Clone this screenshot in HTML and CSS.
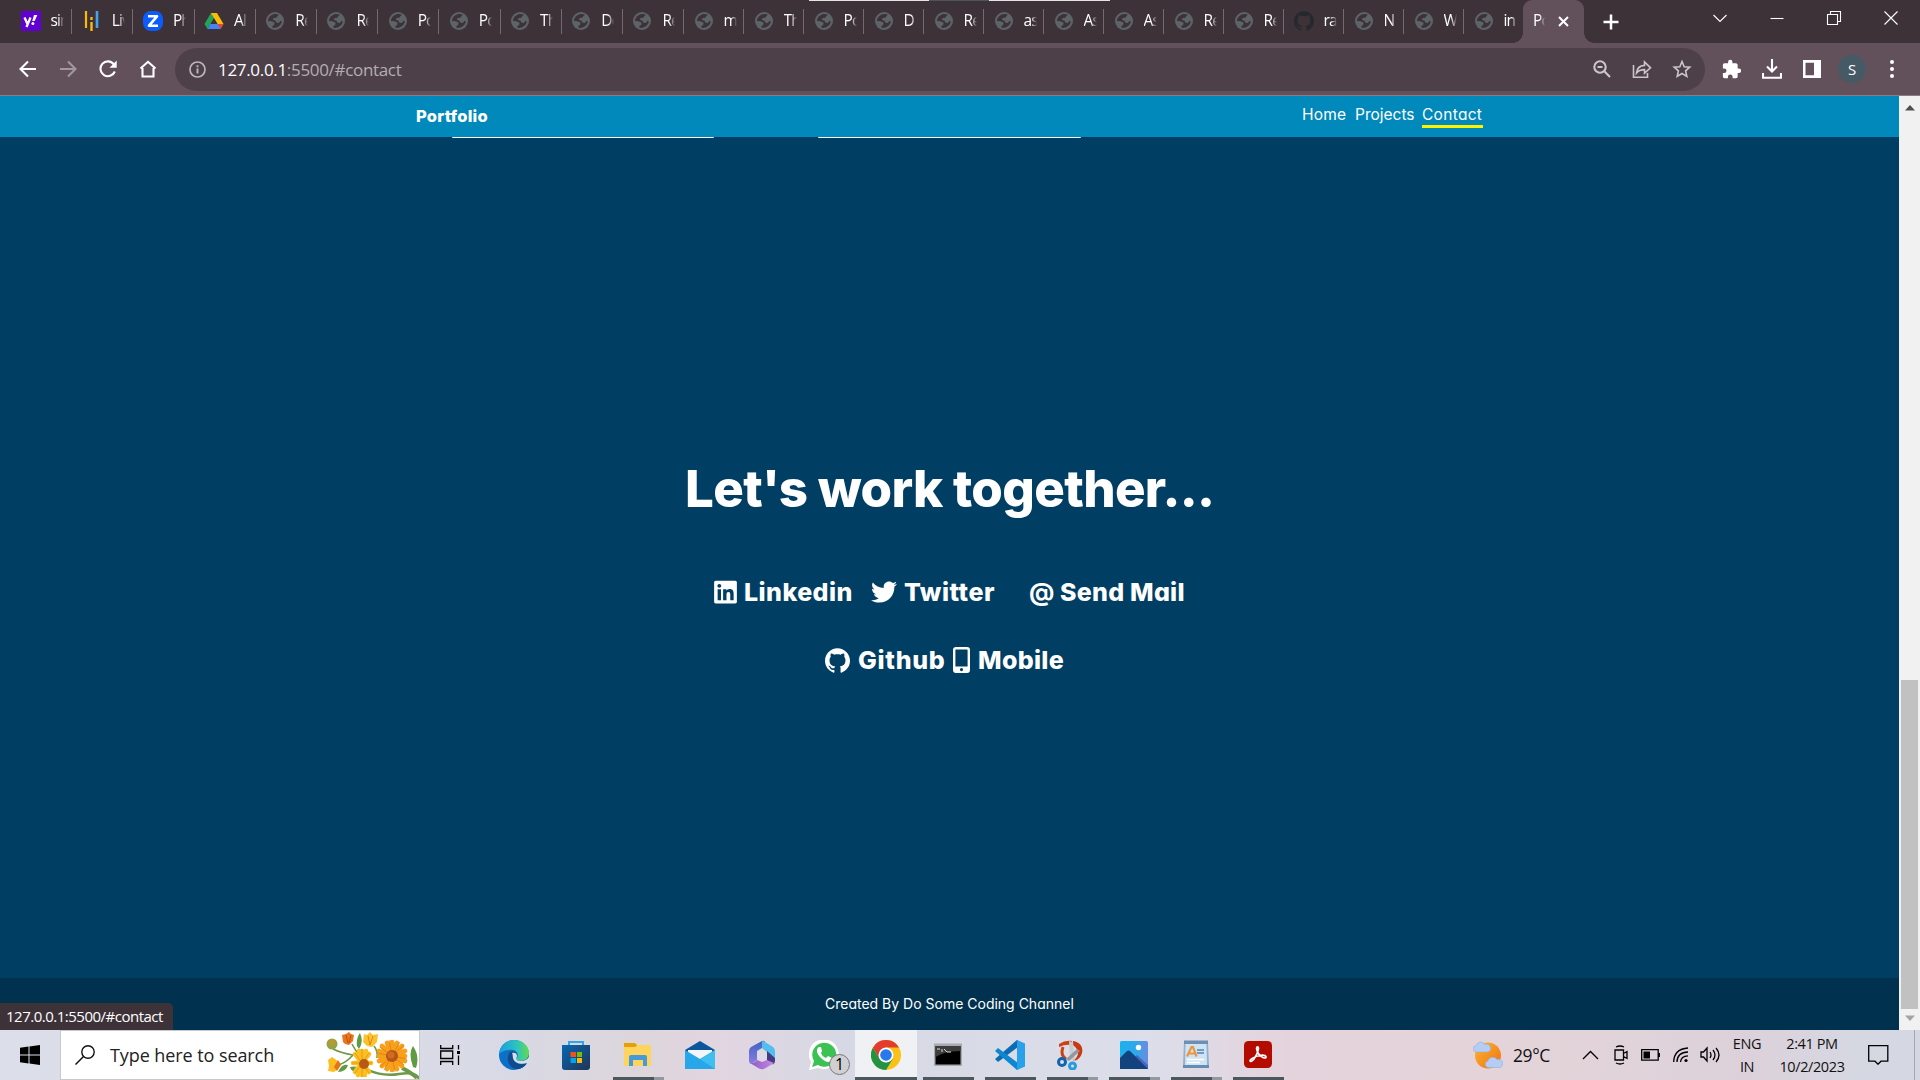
FILE: index.html
```html
<!DOCTYPE html>
<html lang="en">
<head>
<meta charset="utf-8">
<title>Portfolio</title>
<link rel="stylesheet" href="styles.css">
</head>
<body>
<svg class="defs" aria-hidden="true">
  <symbol id="globe" viewBox="0 0 18 18">
    <circle cx="9" cy="9" r="9" fill="#5d6468"/>
    <path d="M7.500 2.200C4.500 3 2 5.700 2 9l3.500.2 3 1.300-.3 2.500-1.700.8v2c4.500.6 9-2.300 9.300-6.300l-1.500-.7-1.300 2.200-2.500-.3-1-2-2.500-.6.500-2 2.700-.3 1.300-1.800 1.500-1.300C11.300 2 9.500 1.700 7.500 2.200z" fill="#3e3239"/>
  </symbol>
  <symbol id="github" viewBox="0 0 24 24"><path d="M12 .297c-6.63 0-12 5.373-12 12 0 5.303 3.438 9.8 8.205 11.385.6.113.82-.258.82-.577 0-.285-.01-1.04-.015-2.04-3.338.724-4.042-1.61-4.042-1.61C4.422 18.07 3.633 17.7 3.633 17.7c-1.087-.744.084-.729.084-.729 1.205.084 1.838 1.236 1.838 1.236 1.07 1.835 2.809 1.305 3.495.998.108-.776.417-1.305.76-1.605-2.665-.3-5.466-1.332-5.466-5.93 0-1.31.465-2.38 1.235-3.22-.135-.303-.54-1.523.105-3.176 0 0 1.005-.322 3.3 1.23.96-.267 1.98-.399 3-.405 1.02.006 2.04.138 3 .405 2.28-1.552 3.285-1.23 3.285-1.23.645 1.653.24 2.873.12 3.176.765.84 1.23 1.91 1.23 3.22 0 4.61-2.805 5.625-5.475 5.92.42.36.81 1.096.81 2.22 0 1.606-.015 2.896-.015 3.286 0 .315.21.69.825.57C20.565 22.092 24 17.592 24 12.297c0-6.627-5.373-12-12-12"/></symbol>
</svg>

<header class="tabstrip">
  <div class="tabs wide">
    <div class="tab"><svg class="fav big" viewBox="0 0 20 20"><rect width="20" height="20" fill="#6001d2"/><path d="M3.500 6.500l3 6.500M9.500 6.500l-4 9.500" stroke="#fff" stroke-width="2.300" fill="none"/><path d="M13 4h3.300l-2.600 6h-2.500z" fill="#fff"/><circle cx="11.900" cy="12.500" r="1.500" fill="#fff"/></svg><span class="title">sin</span></div>
    <div class="tab"><svg class="fav big" viewBox="0 0 20 20"><path d="M4 0v17" stroke="#f9ba08" stroke-width="2.200"/><path d="M9.500 6v3" stroke="#f9ba08" stroke-width="2.400"/><path d="M9.500 11v9" stroke="#f9ba08" stroke-width="2.400"/><path d="M15 0v17" stroke="#42a5e8" stroke-width="2.600"/></svg><span class="title">Liv</span></div>
    <div class="tab"><svg class="fav big" viewBox="0 0 20 20"><rect width="20" height="20" rx="8" fill="#0b5cff"/><path d="M5 5.300h9L6 14.700h9" fill="none" stroke="#fff" stroke-width="2.600" stroke-linejoin="round"/></svg><span class="title">Ph</span></div>
    <div class="tab"><svg class="fav big" viewBox="0 0 20 20"><path d="M7 2h6l-6.500 11L3.500 18 .5 13z" fill="#24a354"/><path d="M7 2h6l6.500 11h-6z" fill="#fbbc04"/><path d="M6.300 13h13.200l-3 5h-13z" fill="#4285f4"/><path d="M13.500 13h6l-3 5z" fill="#ea4335"/><path d="M10 7.400L13.300 13H6.700z" fill="#3e3239"/></svg><span class="title">All</span></div>
    <div class="tab"><svg class="fav"><use href="#globe"/></svg><span class="title">Re</span></div>
    <div class="tab"><svg class="fav"><use href="#globe"/></svg><span class="title">Re</span></div>
    <div class="tab"><svg class="fav"><use href="#globe"/></svg><span class="title">Po</span></div>
    <div class="tab"><svg class="fav"><use href="#globe"/></svg><span class="title">Po</span></div>
    <div class="tab"><svg class="fav"><use href="#globe"/></svg><span class="title">Th</span></div>
    <div class="tab"><svg class="fav"><use href="#globe"/></svg><span class="title">De</span></div>
    <div class="tab"><svg class="fav"><use href="#globe"/></svg><span class="title">Re</span></div>
  </div>
  <div class="tabs">
    <div class="tab"><svg class="fav"><use href="#globe"/></svg><span class="title">m</span></div>
    <div class="tab"><svg class="fav"><use href="#globe"/></svg><span class="title">Th</span></div>
    <div class="tab"><svg class="fav"><use href="#globe"/></svg><span class="title">Po</span></div>
    <div class="tab"><svg class="fav"><use href="#globe"/></svg><span class="title">D</span></div>
    <div class="tab"><svg class="fav"><use href="#globe"/></svg><span class="title">Re</span></div>
    <div class="tab"><svg class="fav"><use href="#globe"/></svg><span class="title">as</span></div>
    <div class="tab"><svg class="fav"><use href="#globe"/></svg><span class="title">As</span></div>
    <div class="tab"><svg class="fav"><use href="#globe"/></svg><span class="title">As</span></div>
    <div class="tab"><svg class="fav"><use href="#globe"/></svg><span class="title">Re</span></div>
    <div class="tab"><svg class="fav"><use href="#globe"/></svg><span class="title">Re</span></div>
    <div class="tab"><svg class="fav big octo"><use href="#github"/></svg><span class="title">ra</span></div>
    <div class="tab"><svg class="fav"><use href="#globe"/></svg><span class="title">N</span></div>
    <div class="tab"><svg class="fav"><use href="#globe"/></svg><span class="title">W</span></div>
    <div class="tab last"><svg class="fav"><use href="#globe"/></svg><span class="title">in</span></div>
  </div>
  <div class="tab-active"><span class="title">Po</span><svg width="11" height="11" viewBox="0 0 11 11"><path d="M1 1l9 9M10 1l-9 9" stroke="#fff" stroke-width="2"/></svg></div>
  <svg class="newtab" width="16" height="16" viewBox="0 0 16 16"><path d="M8 .5v15M.5 8h15" stroke="#fff" stroke-width="2.500"/></svg>
  <div class="winctl">
    <svg viewBox="0 0 16 16"><path d="M1.500 5L8 11.500 14.500 5" /></svg>
    <svg viewBox="0 0 16 16"><path d="M1.500 8.500h13"/></svg>
    <svg viewBox="0 0 16 16"><path d="M1.500 4.500h10v10h-10zM4.500 4.500v-3h10v10h-3"/></svg>
    <svg viewBox="0 0 16 16"><path d="M1.500 1.500l13 13M14.500 1.500l-13 13"/></svg>
  </div>
  <div class="edge-line"><i></i></div>
</header>

<div class="toolbar">
  <div class="btn"><svg width="18" height="18" viewBox="0 0 18 18"><path d="M17 9H2M9 1.500L1.500 9 9 16.500" class="ln"/></svg></div>
  <div class="btn dim"><svg width="18" height="18" viewBox="0 0 18 18"><path d="M1 9h15M9 1.500L16.500 9 9 16.500" class="ln"/></svg></div>
  <div class="btn"><svg width="18" height="18" viewBox="0 0 18 18"><path d="M15.800 11.500A7.400 7.400 0 1 1 14.800 4.300L16 6" class="ln"/><path d="M17.700.5v7.200h-7.200z" fill="#fff"/></svg></div>
  <div class="btn"><svg width="18" height="18" viewBox="0 0 18 18"><path d="M1.500 8.500L9 1.800l7.500 6.700M3.500 8v8.500h11V8" class="ln"/></svg></div>
  <div class="omnibox">
    <svg width="17" height="17" viewBox="0 0 17 17"><circle cx="8.500" cy="8.500" r="7.500" fill="none" stroke="#bdb6ba" stroke-width="1.700"/><path d="M8.500 7.500v5M8.500 4.200v2" stroke="#bdb6ba" stroke-width="1.900"/></svg>
    <span class="url"><b>127.0.0.1</b>:5500/#contact</span>
    <div class="btn soft"><svg width="18" height="18" viewBox="0 0 18 18"><circle cx="7" cy="7" r="5.700" class="ln"/><path d="M4.500 7h5M11.300 11.300l5.700 5.700" class="ln"/></svg></div>
    <div class="btn soft"><svg width="20" height="20" viewBox="0 0 20 20"><path d="M1.500 6v12.300h14V14M4.500 14c.5-5 3-7.300 8-7.600V3l6 5.800-6 5.400v-3.600c-3.500 0-6 .8-8 3.400z" class="thin"/></svg></div>
    <div class="btn soft"><svg width="20" height="20" viewBox="0 0 20 20"><path d="M10 2.500l2.200 5.200 5.600.5-4.200 3.700 1.200 5.500-4.800-2.900-4.800 2.900 1.200-5.500L2.200 8.200l5.600-.5z" class="thin"/></svg></div>
  </div>
  <div class="btn"><svg width="20" height="20" viewBox="1 0 23 23"><path d="M20.500 11H19V7c0-1.100-.9-2-2-2h-4V3.500a2.500 2.500 0 0 0-5 0V5H4c-1.100 0-1.990.9-1.990 2v3.800H3.500a2.700 2.700 0 0 1 0 5.400H2V20c0 1.100.9 2 2 2h3.800v-1.500a2.700 2.700 0 0 1 5.400 0V22H17c1.100 0 2-.9 2-2v-4h1.500a2.500 2.500 0 0 0 0-5z" fill="#fff"/></svg></div>
  <div class="btn"><svg width="20" height="20" viewBox="0 0 20 20"><path d="M10 0v12M5 7.500l5 5 5-5M1 14v4.700h18V14" class="ln"/></svg></div>
  <div class="btn"><svg width="18" height="18" viewBox="0 0 18 18"><path d="M0 0h18v18H0zM2.500 2.700v12.600H11V2.700z" fill="#fff" fill-rule="evenodd"/></svg></div>
  <div class="btn"><span class="avatar">S</span></div>
  <div class="btn"><svg width="4" height="18" viewBox="0 0 4 18"><circle cx="2" cy="2" r="2" fill="#fff"/><circle cx="2" cy="9" r="2" fill="#fff"/><circle cx="2" cy="16" r="2" fill="#fff"/></svg></div>
</div>

<div class="viewport">
  <div class="site">
    <nav class="nav">
      <span class="brand">Portfolio</span>
      <a class="home">Home</a><a class="projects">Projects</a><a class="contact-link">Contact</a>
    </nav>
    <main class="contact">
      <div class="cards"><i></i><i></i></div>
      <h1>Let's work together...</h1>
      <div class="links first">
        <a><svg width="23" height="26" viewBox="0 0 448 512"><path d="M416 32H31.900C14.300 32 0 46.500 0 64.300v383.400C0 465.500 14.300 480 31.900 480H416c17.600 0 32-14.500 32-32.300V64.300c0-17.800-14.400-32.300-32-32.300zM135.400 416H69V202.200h66.500V416zm-33.200-243c-21.300 0-38.500-17.300-38.500-38.500S80.900 96 102.200 96c21.200 0 38.500 17.300 38.500 38.500 0 21.300-17.200 38.500-38.500 38.500zm282.100 243h-66.400V312c0-24.800-.5-56.700-34.500-56.700-34.600 0-39.900 27-39.900 54.900V416h-66.400V202.200h63.700v29.200h.9c8.900-16.800 30.600-34.500 62.900-34.500 67.200 0 79.700 44.300 79.700 101.900V416z"/></svg><span class="linkedin">Linkedin</span></a>
        <a><svg width="26" height="26" viewBox="0 0 512 512"><path d="M459.370 151.716c.325 4.548.325 9.097.325 13.645 0 138.720-105.583 298.558-298.558 298.558-59.452 0-114.680-17.219-161.137-47.106 8.447.974 16.568 1.299 25.340 1.299 49.055 0 94.213-16.568 130.274-44.832-46.132-.975-84.792-31.188-98.112-72.772 6.498.974 12.995 1.624 19.818 1.624 9.421 0 18.843-1.300 27.614-3.573-48.081-9.747-84.143-51.980-84.143-102.985v-1.299c13.969 7.797 30.214 12.670 47.431 13.319-28.264-18.843-46.781-51.005-46.781-87.391 0-19.492 5.197-37.360 14.294-52.954 51.655 63.675 129.300 105.258 216.365 109.807-1.624-7.797-2.599-15.918-2.599-24.040 0-57.828 46.782-104.934 104.934-104.934 30.213 0 57.502 12.670 76.670 33.137 23.715-4.548 46.456-13.320 66.599-25.340-7.798 24.366-24.366 44.833-46.132 57.827 21.117-2.273 41.584-8.122 60.426-16.243-14.292 20.791-32.161 39.308-52.628 54.253z"/></svg><span class="twitter">Twitter</span></a>
        <a><span class="at">@</span><span class="mail">Send Mail</span></a>
      </div>
      <div class="links second">
        <a><svg width="25" height="25"><use href="#github"/></svg><span class="gh">Github</span></a>
        <a><svg width="17" height="26" viewBox="0 0 17 26"><path d="M3 0h11a3 3 0 0 1 3 3v20a3 3 0 0 1-3 3H3a3 3 0 0 1-3-3V3a3 3 0 0 1 3-3zM3 2.400a.6.600 0 0 0-.6.600v16.500h12.200V3a.6.600 0 0 0-.6-.6zM8.500 21a1.600 1.600 0 1 0 0 3.200 1.600 1.600 0 0 0 0-3.200z" fill-rule="evenodd"/></svg><span class="mobile">Mobile</span></a>
      </div>
    </main>
    <footer>Created By Do Some Coding Channel</footer>
  </div>
  <div class="scrollbar">
    <svg width="10" height="6" viewBox="0 0 10 6"><path d="M5 0l5 5.500H0z" fill="#505050"/></svg>
    <div class="thumb"></div>
    <svg width="10" height="6" viewBox="0 0 10 6"><path d="M0 .5h10L5 6z" fill="#a3a3a3"/></svg>
  </div>
  <div class="status">127.0.0.1:5500/#contact</div>
</div>

<div class="taskbar">
  <div class="start"><svg width="20" height="20" viewBox="0 0 20 20"><path d="M0 2.800L8.500 1.600v8H0zM9.500 1.500L20 0v9.600H9.500zM0 10.500h8.500v8L0 17.300zM9.500 10.500H20V20L9.500 18.600z"/></svg></div>
  <div class="search">
    <svg class="lens" width="20" height="20" viewBox="0 0 20 20"><circle cx="13" cy="7" r="6.200" fill="none" stroke="#111" stroke-width="1.400"/><path d="M8.500 11.500L.5 19.500" stroke="#111" stroke-width="1.500"/></svg>
    <span>Type here to search</span>
    <svg class="flowers" width="93" height="47" viewBox="0 0 93 47">
      <g fill="none" stroke="#6b9a48" stroke-width="1.600"><path d="M7 17q8 4 20 6M12 33q8-2 15-10M26 12q3 6 6 9M48 14q4 5 3 12"/><path d="M40 37q16 8 33 5T93 47" stroke-width="2.500"/><path d="M76 36q10 5 15 10" stroke-width="4"/></g>
      <g fill="#5f9b45"><path d="M31 14q-1-8 3-13 4 9-1 16zM12 40q8 0 10-7-6-2-10 7zM87 35q-5-14 0-21 7 10 3 22zM24 35q8-2 10 3-8 4-10-3z"/></g>
      <circle cx="6" cy="12" r="5.500" fill="#92a443"/><circle cx="6" cy="10.500" r="3.300" fill="#b69b35"/>
      <path d="M17 10L16 3l4-1 3-2 2 2 3 1-1 6-4 4-4-1z" fill="#e8761f"/><path d="M20 3l2 8M25 3l-2 8" stroke="#bd4f0e"/>
      <path d="M37 10L38 2l3 1 3-3 3 3 5-1-1 8-5 5-5-1z" fill="#fbc22b"/><path d="M42 4l2 9M47 4l-3 9" stroke="#dc8913"/>
      <path d="M2 28l4-3 3 2 5 4-2 6-4 3-6-1 1-5z" fill="#fdbd20"/><path d="M12 28l3 5-4 6-3-4z" fill="#e2751a"/>
      <g transform="translate(36 31)"><g stroke="#fcbf1f" stroke-width="4.500" stroke-linecap="round"><path d="M0-12V12M-9 0H9M-7-9L7 9M7-9L-7 9M-3-12L3 12M4-12L-4 12"/></g><g stroke="#df8a14" stroke-width=".7"><path d="M0-14V14M-10 0H10M-7-10L7 10M7-10L-7 10"/></g><circle r="5" cx="2" cy="1" fill="#b65a15"/></g>
      <g transform="translate(66 24)"><g stroke="#f9a01b" stroke-width="4.700" stroke-linecap="round"><path d="M0-14V14M-13 0H13M-10-10L10 10M10-10L-10 10M-5-13L5 13M5-13L-5 13M-13-5L13 5M-13 5L13-5"/></g><g stroke="#d87810" stroke-width=".7"><path d="M-3-16L3 16M-15-3L15 3M-12-9L12 9M12-11L-12 11M8-14L-8 14"/></g><circle r="6" fill="#b4531a"/><circle cx="-1" cy="-1" r="3.500" fill="#cf6b25"/></g>
    </svg>
  </div>
  <div class="taskview"><svg width="21" height="20" viewBox="0 0 21 20"><path d="M.7 0v3.500h12V0M.7 20v-3.500h12V20M.7 6h12v7.500H.7zM18.500 0v4.500M18.500 10.500V20" fill="none" stroke="#000" stroke-width="1.300"/><path d="M17 6h3v3h-3z"/></svg></div>
  <div class="apps">
    <div class="app"><svg viewBox="0 0 30 30"><defs><linearGradient id="eg" x1="0" x2="1"><stop offset="0" stop-color="#1b9de2"/><stop offset=".6" stop-color="#2dc4bd"/><stop offset="1" stop-color="#65d94e"/></linearGradient></defs><circle cx="15" cy="15" r="15" fill="#0c70c8"/><path d="M0 14C1 5 7 0 15 0c9 0 15 6 15 13 0 5-4 8-9 8-3 0-4-2-3-3 3-6-3-9-8-8C5 10 1 13 0 14z" fill="url(#eg)"/><path d="M10 13c-4 8 2 17 10 16 4-1 7-4 8-6-7 3-13 0-14-5-.5-3 1-5 3-5-2-2-5-2-7 0z" fill="#104b8d"/><path d="M13 13c2-1 5 0 5 3-1 3-1 5 4 5 4 0 7-2 8-4l0 4-2 2c-6 2-13 0-14-5-.5-2 0-4-1-5z" fill="#dbdde6"/></svg></div>
    <div class="app"><svg viewBox="0 0 30 30"><defs><linearGradient id="st" x1="0" y1="0" x2="1" y2="1"><stop stop-color="#0568b3"/><stop offset="1" stop-color="#223454"/></linearGradient></defs><path d="M8 7V2h14v5" fill="none" stroke="#2ba8ec" stroke-width="2"/><path d="M1 5h28v22a3 3 0 0 1-3 3H4a3 3 0 0 1-3-3z" fill="url(#st)"/><path d="M9.500 12H15v5H9.500z" fill="#f25022"/><path d="M16 12h5v5h-5z" fill="#7fba00"/><path d="M9.500 18H15v5H9.500z" fill="#00a4ef"/><path d="M16 18h5v5h-5z" fill="#ffb900"/></svg></div>
    <div class="app run multi"><svg viewBox="0 0 30 30"><path d="M1 3h11l2 2v3H1z" fill="#e6a100"/><path d="M1 7h11l3-2h13v21H1z" fill="#ffd45d"/><path d="M6 26V17q0-2 2-2h14q2 0 2 2v9h-4v-6H10v6z" fill="#469ad8"/></svg></div>
    <div class="app"><svg viewBox="0 0 30 30"><path d="M0 10L15 1l15 9v5H0z" fill="#0a579e"/><path d="M3 10h24v8L15 26 3 18z" fill="#f4f5f8"/><path d="M0 10l15 9 15-9v19H0z" fill="#26a7e9"/><path d="M15 19l15-9v19z" fill="#41bdf0"/></svg></div>
    <div class="app"><svg viewBox="0 0 30 30"><defs><linearGradient id="oa" x1="0" x2="0" y1="0" y2="1"><stop stop-color="#3a66c4"/><stop offset="1" stop-color="#8f7be0"/></linearGradient><linearGradient id="ob" x1="0" x2="1"><stop stop-color="#8a5cc4"/><stop offset="1" stop-color="#c689e2"/></linearGradient></defs><path d="M15 1L4 7Q2 8.500 2 11v10q0 2 2 3l6-4v-9l8-5V1.500q-1.500-1-3-.5z" fill="url(#oa)"/><path d="M15 1q1.500 0 3 1l8 5q2 1.500 2 4v10q-4 0-8-3v-6l-5-4z" fill="#52bfee"/><path d="M20 11l8 7v3q0 2-2 3.500l-6-3.500z" fill="#453b82"/><path d="M3 23q4 1 7-3l5 2 5-2 7 3-9 5.500q-3 1.500-6 0z" fill="url(#ob)"/><path d="M15 10l5 3v5l-5 3-5-3v-5z" fill="#dfdbe4"/></svg></div>
    <div class="app"><svg viewBox="0 0 30 30"><path d="M0 30l2-8A15 15 0 1 1 9 28z" fill="#fff"/><path d="M3 27l2-6A12 12 0 1 1 9 25z" fill="#3cc253"/><path d="M10 7c-3 2-3 6 2 11 5 5 9 5 11 2l0-2-4-2-2 2c-3-1-4-3-5-5l1-2-1-4z" fill="#fff"/></svg><span class="badge">1</span></div>
    <div class="app run full"><svg viewBox="0 0 30 30"><circle cx="15" cy="15" r="15" fill="#fbc116"/><path d="M2 7.500A15 15 0 0 1 28 7.500H15L8.500 19z" fill="#e33b2e"/><path d="M2 7.500A15 15 0 0 0 15 30l7-11.500-7 4-6.500-3.500z" fill="#229342"/><circle cx="15" cy="15" r="7.500" fill="#fff"/><circle cx="15" cy="15" r="5.800" fill="#2878ee"/></svg></div>
    <div class="app run"><svg viewBox="0 0 30 30"><rect x="1" y="3.500" width="28" height="22.500" fill="#a8abad"/><rect x="2.500" y="6" width="25" height="18.500" fill="#000"/><path d="M2.500 6h25v5q-16 0-25 6z" fill="#3d3d3d"/><path d="M4 9h3M9 9v3M11 9l3 3h4" stroke="#ddd" fill="none"/></svg></div>
    <div class="app run"><svg viewBox="0 0 30 30"><path d="M0 19l3 3L23 7V0h-1z" fill="#0b6cb0"/><path d="M0 11l3-3 20 15v7h-1z" fill="#0f86d0"/><path d="M22 0l8 3.500v23L22 30z" fill="#28a0ec"/></svg></div>
    <div class="app run multi"><svg viewBox="0 0 30 30"><path d="M2 4q6-4 13-3v4Q8 4 2 7z" fill="#cf3f12"/><path d="M16 1c14 2 11 19 0 20q10-8 0-16z" fill="#c93a10"/><path d="M6 7q-3 8 3 12" fill="none" stroke="#cf3f12" stroke-width="3"/><path d="M12 1l4 1 2 19-5-2z" fill="#c9cbce"/><path d="M20 9l3 2-11 10-3-2z" fill="#94989d"/><circle cx="5" cy="22" r="3.500" fill="none" stroke="#1264ae" stroke-width="3"/><circle cx="15.500" cy="26" r="3" fill="none" stroke="#269cde" stroke-width="3"/></svg></div>
    <div class="app run multi"><svg viewBox="0 0 30 30"><defs><linearGradient id="ph"><stop stop-color="#1bb2ed"/><stop offset=".6" stop-color="#2fa8ea"/><stop offset="1" stop-color="#6f8add"/></linearGradient></defs><rect x="1" y="1" width="28" height="28" rx="1.500" fill="url(#ph)"/><path d="M16 17l2-2 11 10v4H22z" fill="#4a66c0"/><path d="M1 18l7-7q1.500-1 3 0l18 18H1z" fill="#12437f"/><circle cx="19.500" cy="7.500" r="2.700" fill="#fff"/></svg></div>
    <div class="app run multi"><svg viewBox="0 0 30 30"><path d="M3 2h24l1 24H2z" fill="#8fb0cf"/><path d="M4.500 3h21l.5 22H4z" fill="#cfe4f3"/><path d="M3 .5h24V4H3z" fill="#6d8fb4"/><path d="M2 25h26v3H2z" fill="#658cb5"/><path d="M6 16.500L10.500 7h1.500l3.500 9.500M8 13.500h6" fill="none" stroke="#ed9440" stroke-width="2.200"/><path d="M16 10h7M16 13h7" stroke="#5384b8" stroke-width="1.500"/><path d="M6 19.500h17M6 22.500h13" stroke="#fff" stroke-width="1.700"/></svg></div>
    <div class="app run"><svg viewBox="0 0 30 30"><rect x="1" y="1" width="28" height="27" rx="4.500" fill="#b30b00"/><path d="M14 7c3-1 1 6-3 12-4 5-6 1-1-1 5-3 12-4 13-1 0 3-8-1-9-7-1-2 0-3 0-3z" fill="none" stroke="#fff" stroke-width="1.700"/></svg></div>
  </div>
  <div class="tray">
    <svg class="weather" width="30" height="28" viewBox="0 0 30 28"><defs><linearGradient id="sun" x1="0" x2="1" y1="0" y2="1"><stop stop-color="#fdb92c"/><stop offset="1" stop-color="#f06d16"/></linearGradient></defs><circle cx="15" cy="14.500" r="13" fill="url(#sun)"/><g fill="#b5cdf3" stroke="#8fb0e6" stroke-width=".6"><path d="M3 11a3.300 3.300 0 0 1 0-6.500A5 5 0 0 1 12 3.500 3.500 3.500 0 0 1 15 11z"/><path d="M15 26.500a3.300 3.300 0 0 1 0-6.500 5 5 0 0 1 9-1.500 3.700 3.700 0 0 1 3 8z"/></g></svg>
    <span class="temp">29°C</span>
    <svg class="chev" width="17" height="10" viewBox="0 0 17 10"><path d="M1 9l7.500-7.500L16 9"/></svg>
    <svg class="cam" width="16" height="20" viewBox="0 0 16 20"><path d="M1 5h8.500v10H1zM9.500 8.500L13 6.500v7l-3.500-2M2 2q4-2 8 0M2 18q4 2 8 0"/></svg>
    <svg class="bat" width="19" height="12" viewBox="0 0 19 12"><path d="M.7.700h16.500v10.500H.7zM18.300 4v4"/><path d="M2.500 2.500H9v7H2.500z" fill="#000" stroke="none"/></svg>
    <svg class="wifi" width="16" height="16" viewBox="0 0 16 16"><path d="M.7 15Q1 2 15 1M4 15Q4 5.500 15 5M7.500 15Q8 9 15 8.800"/><circle cx="13" cy="13.500" r="1.600" fill="#000" stroke="none"/></svg>
    <svg class="vol" width="21" height="18" viewBox="0 0 21 18"><path d="M1 6h2.500L7 2v13l-3.500-4H1zM10 6q2 3 0 6M13 4q4 5 0 10M16 2q6 7 0 14"/></svg>
    <div class="lines lang"><span>ENG</span><span>IN</span></div>
    <div class="lines clock"><span class="time">2:41 PM</span><span class="date">10/2/2023</span></div>
    <svg class="note" width="21" height="20" viewBox="0 0 21 20"><path d="M.7.700h19.100v15.500H13l-3 3-3-3H.7z"/></svg>
  </div>
</div>
</body>
</html>
```
FILE: styles.css
```css
* { box-sizing: border-box; }
body {
  margin: 0;
  width: 1920px;
  height: 1080px;
  overflow: hidden;
  display: flex;
  flex-direction: column;
  font-family: "Open Sans", "Noto Sans", sans-serif;
}
svg { display: block; flex: none; }
.defs { position: absolute; width: 0; height: 0; }

/* Browser tab strip */
.tabstrip {
  position: relative;
  display: flex;
  align-items: center;
  height: 43px;
  padding-left: 11px;
  background: #3e3239;
}
.tabs { display: flex; width: 840px; height: 43px; align-items: center; }
.tabs.wide { width: 673px; }
.tab {
  flex: 1;
  height: 25px;
  display: flex;
  align-items: center;
  padding: 0 0 1px 10.5px;
  border-right: 1px solid #75686f;
}
.tab.last { border-color: transparent; }
.fav { width: 18px; height: 18px; }
.fav.big { width: 20px; height: 20px; margin: 0 -1px; }
.octo { fill: #24292e; }
.title {
  width: 13px;
  margin: 0 0 2px 11px;
  overflow: hidden;
  white-space: nowrap;
  color: #fff;
  font-size: 15.5px;
  line-height: 20px;
  letter-spacing: -0.9px;
  -webkit-mask-image: linear-gradient(90deg, #000 55%, transparent);
  mask-image: linear-gradient(90deg, #000 55%, transparent);
}
.tab-active {
  position: relative;
  width: 61px;
  height: 43px;
  margin-left: -1px;
  display: flex;
  align-items: center;
  background: #62515b;
  border-radius: 9px 9px 0 0;
}
.tab-active::before, .tab-active::after {
  content: "";
  position: absolute;
  bottom: 0;
  left: -10px;
  width: 10px;
  height: 10px;
  background: radial-gradient(circle at 0 0, transparent 9.5px, #62515b 10px);
}
.tab-active::after { left: 61px; transform: scaleX(-1); }
.tab-active .title { margin: 0 13px 3px 10px; width: 12px; }
.newtab { margin-left: 19px; }
.winctl { display: flex; gap: 41px; margin: -7px 0 0 93px; }
.winctl svg { width: 16px; height: 16px; fill: none; stroke: #fff; stroke-width: 1.1; }
.edge-line { position: absolute; left: 809px; top: 0; width: 301px; height: 1px; background: #e8e2e5; }
.edge-line i { display: block; width: 60px; height: 1px; margin-left: 120px; background: #4b565b; }

/* Browser toolbar */
.toolbar {
  display: flex;
  align-items: center;
  height: 53px;
  padding: 0 0 1px 8px;
  background: #62515b;
  border-bottom: 1px solid #8d7b86;
}
.btn { width: 40px; display: flex; justify-content: center; align-items: center; }
.ln { fill: none; stroke: #fff; stroke-width: 2.1; }
.thin { fill: none; stroke: #fff; stroke-width: 1.6; }
.dim { opacity: .4; }
.soft { opacity: .7; }
.omnibox {
  display: flex;
  align-items: center;
  width: 1530px;
  height: 43px;
  margin: 1px 7px 0;
  padding: 0 3px 0 14px;
  border-radius: 22px;
  background: #4d4049;
}
.url { flex: 1; margin-left: 12px; font-size: 17px; letter-spacing: -.32px; color: #b5adb2; }
.url b { font-weight: 400; color: #fff; }
.avatar {
  width: 28px;
  height: 28px;
  border-radius: 50%;
  background: #455a64;
  color: #fff;
  font-size: 15px;
  line-height: 28px;
  text-align: center;
}

/* Web page */
.viewport { position: relative; display: flex; height: 934px; }
.site {
  width: 1899px;
  font-family: Inter, "Liberation Sans", sans-serif;
  font-feature-settings: "cv11";
  color: #fff;
  background: #003e63;
}
.nav { display: flex; align-items: flex-start; height: 41px; padding: 8px 0 0 416px; background: #0089ba; }
.nav a { font-size: 15.5px; line-height: 22px; height: 24px; white-space: nowrap; }
.brand { width: 886px; font-size: 16.5px; font-weight: 800; line-height: 25px; letter-spacing: .2px; }
.nav .home { width: 53px; letter-spacing: .2px; }
.nav .projects { width: 67px; }
.nav .contact-link { width: 61px; border-bottom: 3px solid #fff200; letter-spacing: .3px; }
.contact { height: 841px; }
.cards { display: flex; gap: 104px; padding-left: 452px; height: 322px; }
.cards i { width: 262px; height: 1px; background: #fff; border-radius: 0 0 2px 2px; }
.cards i + i { width: 263px; }
h1 { margin: 0 0 58px; padding-left: 685px; font-size: 51px; line-height: 60px; font-weight: 800; letter-spacing: -.67px; white-space: nowrap; }
.links { display: flex; height: 30px; font-size: 25px; font-weight: 800; line-height: 30px; fill: #fff; }
.links a { display: flex; align-items: center; white-space: nowrap; }
.links.first { padding-left: 714px; margin-bottom: 38px; }
.links.second { padding-left: 825px; }
.linkedin { width: 127px; margin-left: 7px; letter-spacing: .45px; }
.twitter { width: 125px; margin-left: 7px; letter-spacing: .5px; }
.at { width: 31px; font-weight: 700; }
.mail { width: 130px; letter-spacing: .25px; }
.gh { width: 95px; margin-left: 8px; letter-spacing: .7px; }
.mobile { margin-left: 8px; letter-spacing: .3px; }
footer { height: 52px; background: #00324f; font-size: 14px; line-height: 51px; padding-left: 825px; }
.scrollbar {
  width: 21px;
  display: flex;
  flex-direction: column;
  align-items: center;
  padding: 9px 0;
  background: #f1f1f1;
}
.thumb { width: 17px; height: 329px; margin: 569px 0 6px; background: #c1c1c1; }
.status {
  position: absolute;
  left: 0;
  bottom: 0;
  width: 173px;
  height: 27px;
  padding-left: 6px;
  border-radius: 0 5px 0 0;
  background: #3e3239;
  color: #fff;
  font-size: 15px;
  line-height: 26px;
  letter-spacing: -.5px;
}

/* Windows taskbar */
.taskbar {
  display: flex;
  align-items: center;
  height: 50px;
  background: linear-gradient(90deg, #dcdeea 0, #d8dae6 25%, #dcd6dc 33%, #e2d5e0 37%, #d6d9e4 44%, #dcdeea 60%, #e4d3dc 67%, #e4d4d9 79%, #dcd1da 91%, #d5d8e2 97%, #d5d8e2 100%);
}
.start { width: 60px; padding-left: 20px; }
.search {
  display: flex;
  align-items: center;
  width: 360px;
  height: 50px;
  padding-left: 14px;
  border: 1px solid #c8c8c8;
  background: #fff;
  color: #222;
}
.search span { width: 217px; margin-left: 15px; font-size: 18px; letter-spacing: -.08px; white-space: nowrap; }
.taskview { width: 63px; padding-left: 20px; }
.apps { display: flex; height: 50px; }
.app { position: relative; width: 62px; display: flex; align-items: center; justify-content: center; }
.app svg { width: 30px; height: 30px; }
.app.run::after { content: ""; position: absolute; left: 6px; bottom: 0; width: 51px; height: 3px; background: #4b565d; }
.app.multi::after { background: linear-gradient(90deg, #4b565d 41px, #92999f 41px); }
.app.full { background: #f0f1f5; }
.app.full::after { left: 0; width: 62px; }
.badge {
  position: absolute;
  left: 36px;
  top: 24px;
  width: 21px;
  height: 21px;
  border: 1px solid #777;
  border-radius: 50%;
  background: #d0d0d2;
  font-size: 16px;
  line-height: 19px;
  text-align: center;
}
.tray { display: flex; align-items: center; width: 449px; margin-left: auto; margin-right: 5px; height: 50px; padding-left: 7px; border-right: 1px solid #a5a8b0; }
.tray > svg:not(.weather) { fill: none; stroke: #000; stroke-width: 1.3; }
.tray .temp { width: 69px; margin-left: 10px; font-size: 17.5px; letter-spacing: -.4px; color: #111; }
.cam { margin-left: 15px; }
.bat { margin-left: 11px; }
.wifi { margin-left: 13px; }
.vol { margin-left: 11px; }
.lines { display: flex; flex-direction: column; text-align: center; font-size: 14.5px; line-height: 23px; letter-spacing: -.4px; color: #111; }
.lang { width: 50px; margin-left: 1px; }
.clock { width: 80px; margin-left: 0; }
.note { margin-left: 16px; }
```
